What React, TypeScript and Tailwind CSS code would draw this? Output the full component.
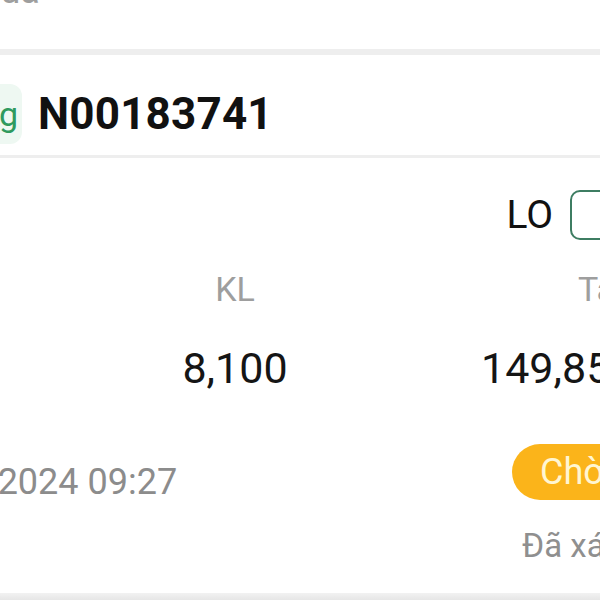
export default function App() {
  return (
    <div className="flex h-[600px] w-[600px] flex-col overflow-hidden bg-white font-['Roboto',sans-serif]">
      {/* previous row, cut off at the top */}
      <div className="h-[49px] shrink-0 overflow-hidden">
        <p className="-ml-[31px] -mt-[30px] text-[36px] leading-[42px] text-[#9e9e9e]">Mua</p>
      </div>
      <div className="h-[6px] shrink-0 bg-[#eeeeee]" />

      {/* order header */}
      <div className="flex h-[100px] shrink-0 items-center gap-[16px] pt-[18px]">
        <div className="-ml-[98px] flex h-[60px] w-[120px] items-center justify-end rounded-[12px] bg-[#eef8f2] pr-[4px] text-[34px] text-[#2f9a5e]">
          Thường
        </div>
        <p className="text-[44px] font-bold leading-none tracking-[0.2px] text-[#111111]">N00183741</p>
      </div>
      <div className="h-[3px] shrink-0 bg-[#eeeeee]" />

      {/* body */}
      <div className="flex flex-col">
        <div className="mt-[32px] flex h-[50px] items-center justify-end gap-[17px]">
          <span className="text-[39px] leading-none text-[#111111]">LO</span>
          <div className="-mr-[20px] h-[50px] w-[50px] rounded-[10px] border-[2px] border-[#3e7d62]" />
        </div>

        <div className="mt-[24px] grid h-[40px] grid-cols-[135px_200px_265px] items-center text-[34px] text-[#9e9e9e]">
          <span />
          <span className="text-center">KL</span>
          <span className="whitespace-nowrap pl-[243px]">Tạm tính</span>
        </div>

        <div className="mt-[32px] grid h-[52px] grid-cols-[135px_200px_265px] items-center text-[43px] text-[#151515]">
          <span />
          <span className="text-center">8,100</span>
          <span className="whitespace-nowrap pl-[146px]">149,850,000</span>
        </div>

        <div className="mt-[56px] flex h-[56px] items-start justify-between">
          <span className="-ml-[113px] mt-[18px] whitespace-nowrap text-[36px] leading-[40px] text-[#8c8c8c]">
            17/05/2024 09:27
          </span>
          <div className="-mr-[80px] flex h-[56px] w-[168px] shrink-0 items-center whitespace-nowrap rounded-full bg-[#fbb41a] pl-[28px] text-[36px] text-[#fff6d2]">
            Chờ khớp
          </div>
        </div>

        <div className="mt-[26px] flex h-[40px] items-center justify-end">
          <span className="-mr-[120px] w-[198px] whitespace-nowrap text-[33px] text-[#8f8f8f]">Đã xác nhận</span>
        </div>
      </div>

      <div className="mt-auto h-[7px] shrink-0 bg-gradient-to-b from-[#f2f2f2] to-[#e6e6e6]" />
    </div>
  );
}
